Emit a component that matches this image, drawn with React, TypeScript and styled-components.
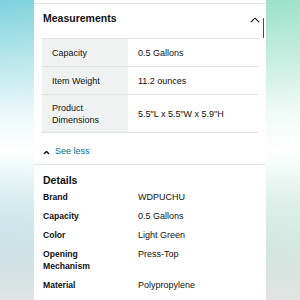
import React from "react";
import styled, { createGlobalStyle } from "styled-components";

const GlobalStyle = createGlobalStyle`
  html, body {
    margin: 0;
    padding: 0;
    height: 100%;
  }
  body {
    font-family: "Liberation Sans", Arial, sans-serif;
    color: #0f1111;
    background:
      linear-gradient(to bottom, rgba(255,255,255,0) 0%, rgba(255,255,255,0.85) 38%, #ffffff 50%, rgba(255,255,255,0) 100%),
      linear-gradient(to right, #7fd2de 0%, #9fe2ca 100%),
      #e4e5e5;
  }
  #root {
    height: 300px;
  }
`;

const Page = styled.div`
  display: flex;
  justify-content: center;
  height: 300px;
  overflow: hidden;
  background: linear-gradient(to bottom, rgba(228,229,229,0) 55%, #e3e4e4 100%);
`;

const Panel = styled.div`
  position: relative;
  width: 232px;
  height: 300px;
  background: #ffffff;
  padding-top: 3px;
  box-sizing: border-box;
  overflow: hidden;
`;

const Section = styled.section`
  border-top: 1px solid #e3e6e6;
`;

const SectionHeader = styled.div`
  display: flex;
  align-items: center;
  justify-content: space-between;
  height: 34px;
  padding: 0 6px 6px 9px;
  box-sizing: border-box;
`;

const Heading = styled.h2`
  margin: 0;
  font-size: 10.5px;
  line-height: 13px;
  font-weight: 700;
`;

const Caret = styled.svg`
  display: block;
  margin-top: 3px;
`;

const ScrollThumb = styled.div`
  position: absolute;
  right: 2px;
  top: 18px;
  width: 1.5px;
  height: 20px;
  background: #4a4a4a;
  border-radius: 1px;
`;

const SpecTable = styled.table`
  margin: 0 8px;
  width: calc(100% - 16px);
  border-collapse: collapse;
  font-size: 9px;
  line-height: 12px;
`;

const SpecRow = styled.tr`
  border-top: 1px solid #dfe2e2;
  border-bottom: 1px solid #dfe2e2;
`;

const SpecLabel = styled.th<{ $tall?: boolean }>`
  width: 86px;
  box-sizing: border-box;
  background: #f0f2f2;
  text-align: left;
  font-weight: 400;
  padding: ${(p) => (p.$tall ? "6.5px" : "7.5px")} 10px;
  vertical-align: middle;
`;

const SpecValue = styled.td<{ $tall?: boolean }>`
  padding: ${(p) => (p.$tall ? "6.5px" : "7.5px")} 10px;
  vertical-align: middle;
`;

const ToggleRow = styled.div`
  display: flex;
  align-items: center;
  gap: 5px;
  padding: 12px 9px 7px;
  font-size: 9px;
  line-height: 12px;
  color: #007185;
`;

const DetailsHeader = styled.div`
  padding: 9px 9px 4px;
`;

const DetailsGrid = styled.dl`
  display: grid;
  grid-template-columns: 95px 1fr;
  row-gap: 7px;
  margin: 0;
  padding: 0 9px;
  font-size: 9px;
  line-height: 12px;
`;

const DetailKey = styled.dt`
  font-weight: 700;
  font-size: 8.6px;
  width: 70px;
`;

const DetailValue = styled.dd`
  margin: 0;
`;

const measurements = [
  { label: "Capacity", value: "0.5 Gallons" },
  { label: "Item Weight", value: "11.2 ounces" },
  { label: "Product Dimensions", value: "5.5\"L x 5.5\"W x 5.9\"H", tall: true },
];

const details = [
  { label: "Brand", value: "WDPUCHU" },
  { label: "Capacity", value: "0.5 Gallons" },
  { label: "Color", value: "Light Green" },
  { label: "Opening Mechanism", value: "Press-Top" },
  { label: "Material", value: "Polypropylene" },
];

const UpCaret = ({ w, h, sw }: { w: number; h: number; sw: number }) => (
  <Caret width={w} height={h} viewBox={`0 0 ${w} ${h}`}>
    <path
      d={`M${sw} ${h - sw} L${w / 2} ${sw} L${w - sw} ${h - sw}`}
      fill="none"
      stroke="#0f1111"
      strokeWidth={sw}
      strokeLinecap="round"
      strokeLinejoin="round"
    />
  </Caret>
);

export default function App() {
  return (
    <>
      <GlobalStyle />
      <Page>
        <Panel>
          <Section>
            <SectionHeader>
              <Heading>Measurements</Heading>
              <UpCaret w={10} h={6} sw={1.1} />
            </SectionHeader>
            <SpecTable>
              <tbody>
                {measurements.map((m) => (
                  <SpecRow key={m.label}>
                    <SpecLabel $tall={m.tall}>{m.label}</SpecLabel>
                    <SpecValue $tall={m.tall}>{m.value}</SpecValue>
                  </SpecRow>
                ))}
              </tbody>
            </SpecTable>
            <ToggleRow>
              <UpCaret w={7} h={5} sw={1.4} />
              <span>See less</span>
            </ToggleRow>
          </Section>
          <Section>
            <DetailsHeader>
              <Heading>Details</Heading>
            </DetailsHeader>
            <DetailsGrid>
              {details.map((d) => (
                <React.Fragment key={d.label}>
                  <DetailKey>{d.label}</DetailKey>
                  <DetailValue>{d.value}</DetailValue>
                </React.Fragment>
              ))}
            </DetailsGrid>
          </Section>
          <ScrollThumb />
        </Panel>
      </Page>
    </>
  );
}
